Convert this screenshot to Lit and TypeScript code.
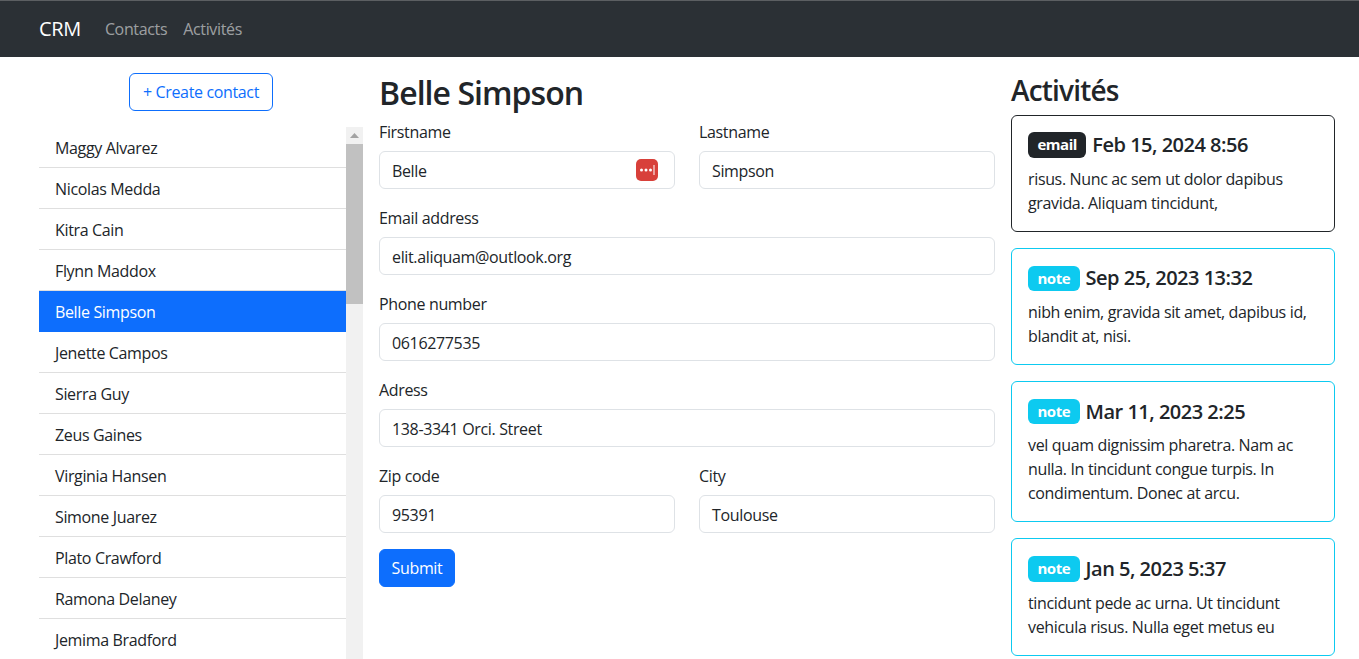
import { LitElement, html, css } from "lit";
import { customElement } from "lit/decorators.js";

const names = ["Maggy Alvarez","Nicolas Medda","Kitra Cain","Flynn Maddox","Belle Simpson","Jenette Campos","Sierra Guy","Zeus Gaines","Virginia Hansen","Simone Juarez","Plato Crawford","Ramona Delaney","Jemima Bradford"];

const activities = [
  { kind: "email", date: "Feb 15, 2024 8:56", text: "risus. Nunc ac sem ut dolor dapibus gravida. Aliquam tincidunt," },
  { kind: "note", date: "Sep 25, 2023 13:32", text: "nibh enim, gravida sit amet, dapibus id, blandit at, nisi." },
  { kind: "note", date: "Mar 11, 2023 2:25", text: "vel quam dignissim pharetra. Nam ac nulla. In tincidunt congue turpis. In condimentum. Donec at arcu." },
  { kind: "note", date: "Jan 5, 2023 5:37", text: "tincidunt pede ac urna. Ut tincidunt vehicula risus. Nulla eget metus eu" },
];

@customElement("app-root")
export class AppRoot extends LitElement {
  static styles = css`
    :host { display: block; height: 100vh; overflow: hidden; font-family: "Open Sans", "Noto Sans", sans-serif; font-size: 16px; line-height: 24px; color: #212529; letter-spacing: -0.35px; background: #fff; }
    * { box-sizing: border-box; }
    .nav { height: 57px; background: #2b3035; border-top: 1px solid #5c5f62; display: flex; align-items: center; padding-left: 39px; }
    .brand { font-size: 20px; color: #fff; margin-right: 24px; }
    .link { color: rgba(255,255,255,.55); margin-right: 16px; }
    .main { display: grid; grid-template-columns: 324px 1fr 324px; column-gap: 16px; padding: 16px 24px 0 39px; height: 602px; }
    .side { display: flex; flex-direction: column; align-items: center; min-height: 0; margin-bottom: -16px; height: 586px; }
    .create { height: 38px; width: 144px; border: 1px solid #0d6efd; border-radius: 6px; color: #0d6efd; background: #fff; font: inherit; letter-spacing: inherit; margin-bottom: 16px; padding: 0; }
    .scroller { width: 100%; flex: 1; min-height: 0; display: flex; }
    .list { flex: 1; min-width: 0; }
    .bar { width: 17px; background: #f1f1f1; display: flex; flex-direction: column; align-items: center; }
    .arrow { height: 17px; flex: none; display: flex; align-items: center; justify-content: center; }
    .arrow svg { width: 9px; height: 5px; display: block; }
    .thumb { width: 100%; height: 160px; flex: none; background: #c1c1c1; }
    .item { height: 41px; padding: 9px 16px 7px; border-bottom: 1px solid rgba(0,0,0,.125); }
    .item.active { background: #0d6efd; color: #fff; border-bottom-color: #0d6efd; }
    h2 { font-size: 32px; line-height: 38.4px; font-weight: 600; margin: 0 0 8px; letter-spacing: -0.95px; padding-top: 1px; height: 38.4px; }
    h3 { font-size: 28px; line-height: 33.6px; font-weight: 600; margin: 0 0 8px; letter-spacing: -0.8px; padding-top: 1px; height: 33.6px; }
    .form { display: grid; grid-template-columns: 1fr 1fr; column-gap: 24px; row-gap: 16px; align-content: start; }
    .head { min-width: 0; }
    .wide { grid-column: 1 / -1; }
    label { display: block; padding-top: 1px; margin-bottom: 7px; }
    .control { position: relative; height: 38px; border: 1px solid #dee2e6; border-radius: 6px; padding: 7px 12px 5px; background: #fff; }
    .lp { position: absolute; right: 16px; top: 7px; width: 22px; height: 22px; display: block; }
    .submit { width: 76px; height: 38px; background: #0d6efd; color: #fff; border: 1px solid #0d6efd; border-radius: 6px; font: inherit; letter-spacing: inherit; padding: 0; }
    .card { border: 1px solid #0dcaf0; border-radius: 6px; padding: 16px; margin-bottom: 16px; }
    .card.email { border-color: #212529; }
    h5 { font-size: 20px; line-height: 24px; font-weight: 600; margin: 0 0 8px; display: flex; align-items: center; gap: 6px; height: 27.25px; letter-spacing: -0.5px; }
    .badge { background: #0dcaf0; color: #fff; font-size: 15px; line-height: 15px; font-weight: 700; padding: 5px 9.5px; border-radius: 6px; height: 25.5px; letter-spacing: -0.5px; }
    .email .badge { background: #212529; }
    p { margin: 0; }
  `;

  private field(label: string, value: string, wide = false, icon = false) {
    return html`<div class=${wide ? "wide" : ""}>
      <label>${label}</label>
      <div class="control">${value}${icon ? html`<svg class="lp" viewBox="0 0 22 22"><rect width="22" height="22" rx="5" fill="#d8403a"/><circle cx="5.5" cy="11" r="1.5" fill="#fff"/><circle cx="10" cy="11" r="1.5" fill="#fff"/><circle cx="14.5" cy="11" r="1.5" fill="#fff"/><rect x="17.5" y="6" width="1" height="10" fill="#fff"/></svg>` : ""}</div>
    </div>`;
  }

  render() {
    return html`
      <div class="nav"><span class="brand">CRM</span><span class="link">Contacts</span><span class="link">Activités</span></div>
      <div class="main">
        <div class="side">
          <button class="create">+ Create contact</button>
          <div class="scroller">
            <div class="list">${names.map((n) => html`<div class="item ${n === "Belle Simpson" ? "active" : ""}">${n}</div>`)}</div>
            <div class="bar">
              <div class="arrow"><svg viewBox="0 0 9 5"><path d="M4.5 0 9 5H0z" fill="#a3a3a3"/></svg></div>
              <div class="thumb"></div>
            </div>
          </div>
        </div>
        <div class="head">
          <h2>Belle Simpson</h2>
          <div class="form">
            ${this.field("Firstname", "Belle", false, true)}
            ${this.field("Lastname", "Simpson")}
            ${this.field("Email address", "elit.aliquam@outlook.org", true)}
            ${this.field("Phone number", "0616277535", true)}
            ${this.field("Adress", "138-3341 Orci. Street", true)}
            ${this.field("Zip code", "95391")}
            ${this.field("City", "Toulouse")}
            <div class="wide"><button class="submit">Submit</button></div>
          </div>
        </div>
        <div class="head">
          <h3>Activités</h3>
          ${activities.map((a) => html`<div class="card ${a.kind}"><h5><span class="badge">${a.kind}</span>${a.date}</h5><p>${a.text}</p></div>`)}
        </div>
      </div>`;
  }
}
